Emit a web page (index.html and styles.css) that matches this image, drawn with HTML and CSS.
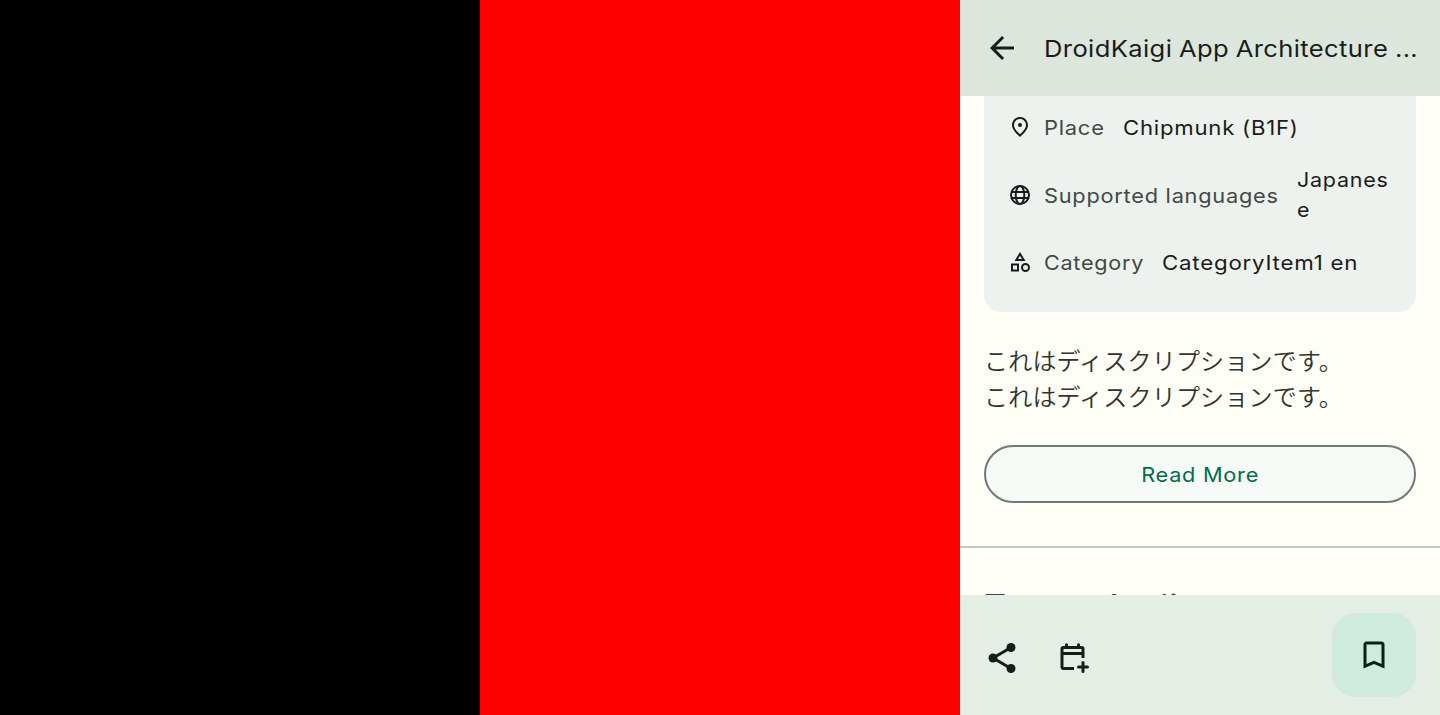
FILE: index.html
```
<!DOCTYPE html>
<html lang="en">
<head>
<meta charset="utf-8">
<title>Session detail</title>
<link rel="stylesheet" href="styles.css">
</head>
<body>
<div class="panes">
  <div class="pane pane-black"></div>
  <div class="pane pane-red"></div>
  <main class="screen">
    <header class="top-bar">
      <svg class="icon-lg" viewBox="0 0 24 24"><path d="M20 11H7.830l5.590-5.590L12 4l-8 8 8 8 1.410-1.410L7.830 13H20z"/></svg>
      <h1 class="title">DroidKaigi App Architecture ...</h1>
    </header>
    <div class="content">
      <section class="card">
        <div class="row">
          <svg class="icon-sm" viewBox="0 0 24 24"><path fill-rule="evenodd" d="M12 2C7.600 2 4 5.400 4 10.200c0 3.200 2.700 7.200 8 11.800 5.300-4.600 8-8.600 8-11.800C20 5.400 16.400 2 12 2zm0 2c3.350 0 6 2.570 6 6.200 0 2.340-1.950 5.440-6 9.140-4.050-3.700-6-6.790-6-9.140C6 6.570 8.650 4 12 4z"/><circle cx="12" cy="10" r="2"/></svg>
          <span class="label l-place">Place</span><span class="value v-place">Chipmunk (B1F)</span>
        </div>
        <div class="row">
          <svg class="icon-sm" viewBox="0 0 24 24"><g fill="none" stroke="currentColor" stroke-width="2"><circle cx="12" cy="12" r="9"/><ellipse cx="12" cy="12" rx="4.300" ry="9"/><path d="M3.500 9h17M3.500 15h17"/></g></svg>
          <span class="label l-lang">Supported languages</span><span class="value v-lang">Japanes<br>e</span>
        </div>
        <div class="row">
          <svg class="icon-sm" viewBox="0 0 24 24"><path fill-rule="evenodd" d="M12 2l-5.500 9h11zm0 3.840L13.930 9h-3.870zM17.500 13a4.500 4.500 0 1 0 0 9 4.500 4.500 0 0 0 0-9zm0 7a2.500 2.500 0 1 1 0-5 2.500 2.500 0 0 1 0 5zM3 21.500h8v-8H3zm2-6h4v4H5z"/></svg>
          <span class="label l-cat">Category</span><span class="value v-cat">CategoryItem1 en</span>
        </div>
      </section>
      <p class="description">これはディスクリプションです。<br>これはディスクリプションです。</p>
      <button class="read-more"><span class="read-more-text">Read More</span></button>
      <hr class="divider">
      <h2 class="section-title">Target Audience</h2>
    </div>
    <footer class="bottom-bar">
      <svg class="icon-lg" viewBox="0 0 24 24"><circle cx="18" cy="5" r="3"/><circle cx="6" cy="12" r="3"/><circle cx="18" cy="19" r="3"/><path d="M18 5L6 12l12 7" fill="none" stroke="currentColor" stroke-width="2"/></svg>
      <svg class="icon-lg" viewBox="0 0 24 24"><g fill="none" stroke="currentColor" stroke-width="2"><path d="M12 19H5a1 1 0 0 1-1-1V6a1 1 0 0 1 1-1h12a1 1 0 0 1 1 1v6M4 9h14"/><path d="M7 5V3.100M15 5V3.100M18 15v6M15 18h6" stroke-linecap="round"/></g></svg>
      <button class="fab"><svg class="icon-lg" viewBox="0 0 24 24"><path d="M17 3H7c-1.100 0-2 .9-2 2v16l7-3 7 3V5c0-1.100-.9-2-2-2zm0 15l-5-2.180L7 18V5h10z"/></svg></button>
    </footer>
  </main>
</div>
</body>
</html>
```
FILE: styles.css
```
* { box-sizing: border-box; }
body { margin: 0; font-family: Inter, "Noto Sans CJK JP", sans-serif; color: #191c1a; }
h1, h2, p { margin: 0; font-weight: 400; }
button { font: inherit; margin: 0; padding: 0; }
svg { display: block; flex: none; fill: currentColor; overflow: visible; }
.panes { display: grid; grid-template-columns: repeat(3, 480px); height: 715px; overflow: hidden; }
.pane-black { background: #000; }
.pane-red { background: #f00; }
.screen { display: flex; flex-direction: column; height: 715px; background: #fffff7; }
.top-bar { display: flex; align-items: center; gap: 24px; flex: none; height: 96px; padding-left: 24px; background: #dde6dd; }
.title { font-size: 23.200px; line-height: 36px; white-space: nowrap; letter-spacing: .35px; word-spacing: -.8px; padding-top: 1px; transform: scaleX(1.102); transform-origin: left; }
.icon-lg { width: 36px; height: 36px; }
.icon-sm { width: 24px; height: 24px; margin-right: 12px; }
.content { flex: 1; min-height: 0; overflow: hidden; }
.card { display: flex; flex-direction: column; gap: 22.500px; height: 216px; margin: 0 24px; padding: 16px 24px 0; background: #edf2ee; border-radius: 0 0 18px 18px; }
.row { display: flex; align-items: center; font-size: 20.300px; line-height: 30px; white-space: nowrap; }
.label, .value { flex: none; letter-spacing: .7px; padding-top: 1px; margin-bottom: -1px; transform-origin: left; }
.label { color: #404944; }
/* wide geometric letterforms */
.l-place { width: 79px; transform: scaleX(1.08); }
.l-lang { width: 253px; transform: scaleX(1.073); }
.l-cat { width: 118px; transform: scaleX(1.064); }
.v-place { transform: scaleX(1.092); }
.v-lang { padding-top: 0; margin-bottom: 0; transform: scaleX(1.060); }
.v-cat { transform: scaleX(1.100); }
.description { margin: 30px 24px 0; font-size: 24px; line-height: 36px; letter-spacing: .2px; font-family: "Noto Sans CJK JP", sans-serif; font-weight: 350; color: #303330; }
.read-more { display: block; width: 432px; height: 58px; margin: 31px 24px 0; border: 2px solid #707973; border-radius: 29px; background: #f6fbf8; color: #006c4c; font-size: 20.300px; }
.read-more-text { display: inline-block; letter-spacing: .7px; transform: scaleX(1.070); }
.divider { height: 2px; margin: 43px 0 0; border: 0; background: #bfc9c2; }
.section-title { width: max-content; margin: 35px 24px 0; font-size: 32px; line-height: 48px; letter-spacing: .7px; transform: scaleX(1.070); transform-origin: left; color: #404944; }
.bottom-bar { display: flex; align-items: center; gap: 36px; flex: none; height: 120px; padding: 0 24px; background: #e4eee5; }
.bottom-bar > .icon-lg { margin-top: 6px; }
.fab { display: flex; align-items: center; justify-content: center; width: 84px; height: 84px; margin-left: auto; border: 0; border-radius: 24px; background: #ceebdd; color: #092017; }
```
